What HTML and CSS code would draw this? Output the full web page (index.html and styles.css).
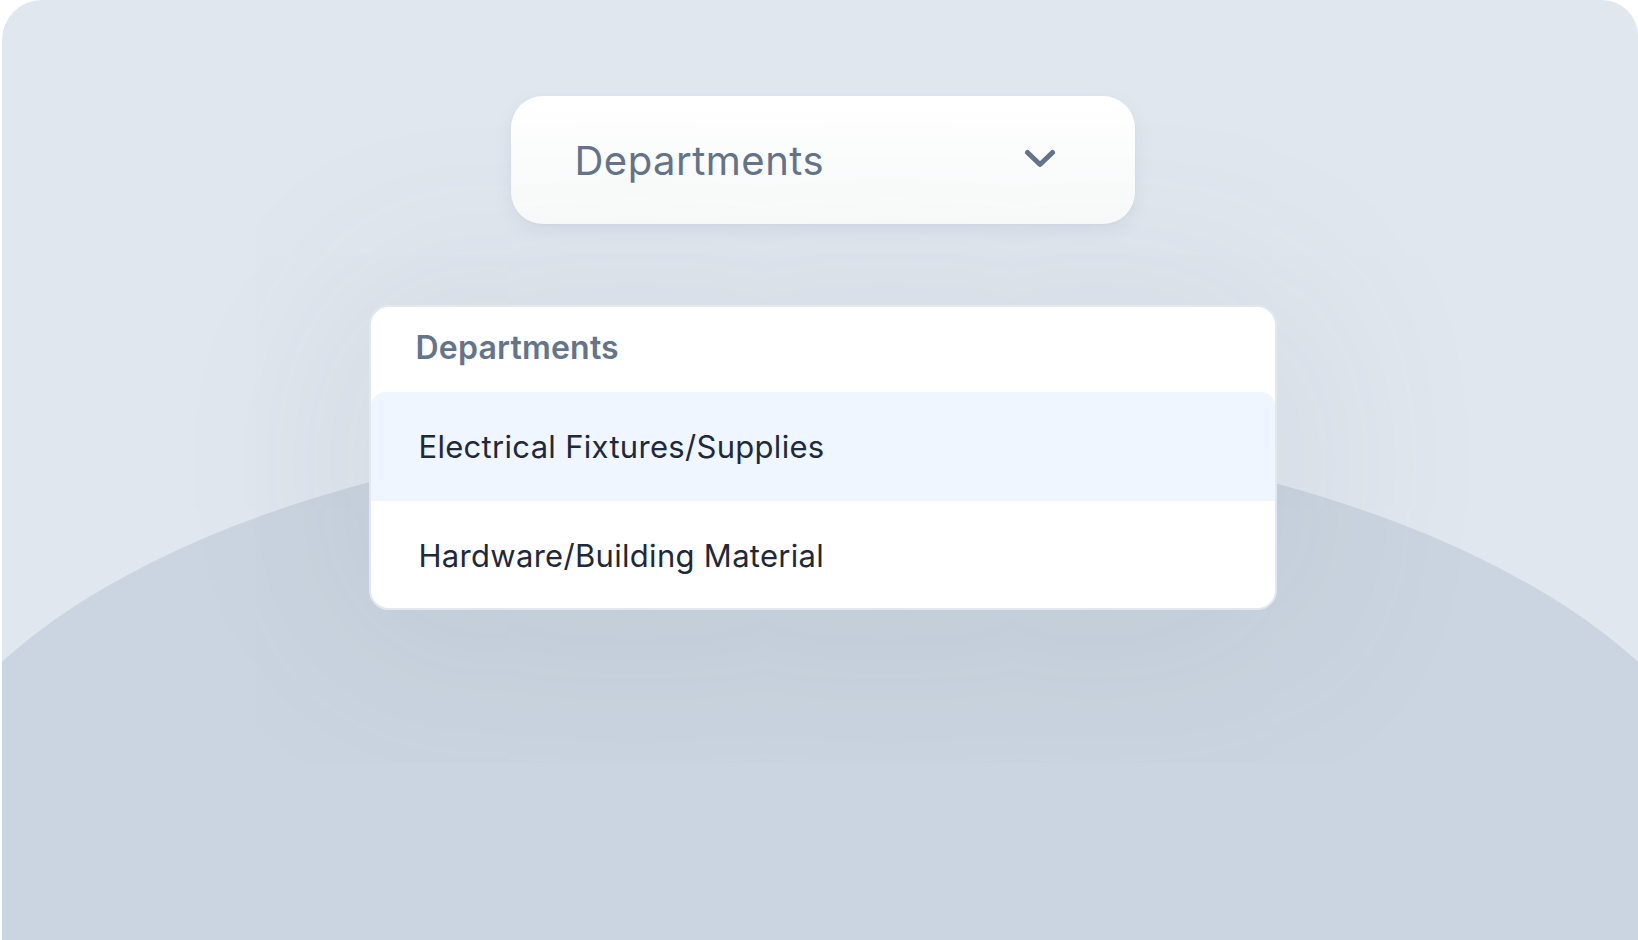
FILE: index.html
```html
<!DOCTYPE html>
<html lang="en">
<head>
<meta charset="utf-8">
<title>Departments dropdown</title>
<link rel="stylesheet" href="styles.css">
</head>
<body>
  <div class="stage">
    <div class="content">
      <button class="trigger" type="button">
        <span class="trigger-label">Departments</span>
        <svg class="chevron" width="32" height="20" viewBox="0 0 32 20" aria-hidden="true">
          <path d="M3.5 3.5 L16 15.5 L28.5 3.5" fill="none" stroke="#64748b" stroke-width="5" stroke-linecap="round" stroke-linejoin="round"/>
        </svg>
      </button>
      <div class="menu">
        <div class="menu-header">Departments</div>
        <div class="menu-item active">Electrical Fixtures/Supplies</div>
        <div class="menu-item">Hardware/Building Material</div>
      </div>
    </div>
  </div>
</body>
</html>
```

FILE: styles.css
```css
html, body {
  margin: 0;
  padding: 0;
  background: #ffffff;
  overflow: hidden;
  height: 940px;
}

body {
  font-family: "Inter", "Noto Sans", "Liberation Sans", sans-serif;
}

.stage {
  position: relative;
  margin-left: 2px;
  height: 940px;
  background: #e1e7ef;
  border-radius: 40px 36px 0 0;
  overflow: hidden;
}

.stage::before {
  content: "";
  position: absolute;
  left: -107px;
  top: 426px;
  width: 1850px;
  height: 884px;
  border-radius: 50%;
  background: #cbd5e1;
  z-index: 0;
}

.content {
  position: relative;
  z-index: 1;
  display: flex;
  flex-direction: column;
  align-items: center;
  padding-top: 96px;
  padding-left: 5px;
}

.trigger {
  box-sizing: border-box;
  width: 624px;
  height: 128px;
  border: none;
  border-radius: 32px;
  background: linear-gradient(180deg, #ffffff 0%, #fafbfb 100%);
  box-shadow: 0 6px 18px rgba(100, 116, 139, 0.09), 0 1px 3px rgba(100, 116, 139, 0.05);
  display: flex;
  align-items: center;
  justify-content: space-between;
  padding: 0 79px 0 64px;
  font-family: inherit;
  cursor: pointer;
}

.trigger-label {
  font-size: 40px;
  font-weight: 400;
  color: #64748b;
  letter-spacing: 0.5px;
}

.chevron {
  display: block;
  margin-top: -2px;
}

.menu {
  box-sizing: border-box;
  width: 908px;
  margin-top: 81px;
  background: #ffffff;
  border: 2px solid #e3e8ef;
  border-radius: 20px;
  overflow: hidden;
  box-shadow: 0 10px 200px 30px rgba(71, 85, 105, 0.09);
}

.menu-header {
  height: 85px;
  box-sizing: border-box;
  padding-bottom: 4px;
  display: flex;
  align-items: center;
  padding-left: 45px;
  font-size: 32px;
  font-weight: 600;
  color: #64748b;
  letter-spacing: 0.2px;
}

.menu-item {
  height: 108px;
  display: flex;
  align-items: center;
  padding-left: 48px;
  font-size: 31px;
  font-weight: 400;
  color: #1e293b;
  letter-spacing: 0.3px;
}

.menu-item.active {
  background: #eff6ff;
  border-radius: 14px 14px 0 0;
  height: 109px;
}

.menu-item:last-child {
  height: 107px;
  padding-top: 2px;
  box-sizing: border-box;
}
```
